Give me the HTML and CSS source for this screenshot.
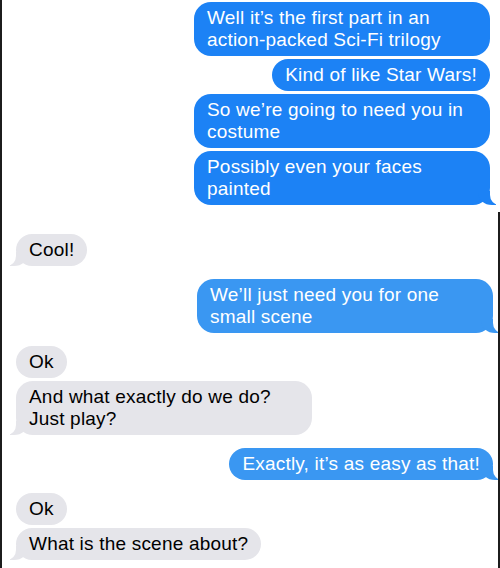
FILE: index.html
```html
<!DOCTYPE html>
<html>
<head>
<meta charset="utf-8">
<link rel="stylesheet" href="styles.css">
</head>
<body>
<div class="chat">
  <div class="group out">
    <div class="msg dark">Well it’s the first part in an action-packed Sci-Fi trilogy</div>
    <div class="msg dark">Kind of like Star Wars!</div>
    <div class="msg dark">So we’re going to need you in costume</div>
    <div class="msg dark tail">Possibly even your faces painted</div>
  </div>
  <div class="group in spaced">
    <div class="msg tail">Cool!</div>
  </div>
  <div class="group out shifted">
    <div class="msg tail">We’ll just need you for one small scene</div>
  </div>
  <div class="group in">
    <div class="msg">Ok</div>
    <div class="msg tail">And what exactly do we do? Just play?</div>
  </div>
  <div class="group out shifted">
    <div class="msg tail">Exactly, it’s as easy as that!</div>
  </div>
  <div class="group in">
    <div class="msg">Ok</div>
    <div class="msg tail">What is the scene about?</div>
  </div>
</div>
</body>
</html>
```

FILE: styles.css
```css
html, body {
  margin: 0;
  padding: 0;
  background: #fff;
}

body {
  font-family: "Liberation Sans", Arial, sans-serif;
  font-size: 19px;
  line-height: 22px;
  letter-spacing: 0.2px;
}

.chat {
  position: relative;
  box-sizing: border-box;
  width: 500px;
  height: 568px;
  overflow: hidden;
  padding-top: 2px;
  border-left: 2px solid #1c1c1c;
  display: flex;
  flex-direction: column;
  gap: 13px;
}

.chat::after {
  content: "";
  position: absolute;
  right: 0;
  top: 212px;
  bottom: 0;
  width: 2px;
  background: #1c1c1c;
  z-index: 2;
}

.group {
  display: flex;
  flex-direction: column;
  gap: 3px;
}

.group.spaced {
  margin-top: 16px;
}

.group.out {
  align-items: flex-end;
  padding-right: 10px;
}

.group.out.shifted {
  padding-right: 7px;
}

.group.in {
  align-items: flex-start;
  padding-left: 14px;
}

.msg {
  position: relative;
  box-sizing: border-box;
  max-width: 296px;
  padding: 5px 13px;
  border-radius: 17px;
}

.out .msg {
  background: #3a97f2;
  color: #fff;
}

.out .msg.dark {
  background: #1c82f5;
}

.in .msg {
  background: #e5e5ea;
  color: #000;
}

.out .msg.tail::before {
  content: "";
  position: absolute;
  right: -6px;
  bottom: 0;
  width: 18px;
  height: 14px;
  background: #3a97f2;
  border-bottom-left-radius: 14px 12px;
}

.out .msg.dark.tail::before {
  background: #1c82f5;
}

.out .msg.tail::after {
  content: "";
  position: absolute;
  right: -14px;
  bottom: 0;
  width: 14px;
  height: 14px;
  background: #fff;
  border-bottom-left-radius: 9px 10px;
}

.in .msg.tail::before {
  content: "";
  position: absolute;
  left: -6px;
  bottom: 0;
  width: 18px;
  height: 14px;
  background: #e5e5ea;
  border-bottom-right-radius: 14px 12px;
}

.in .msg.tail::after {
  content: "";
  position: absolute;
  left: -14px;
  bottom: 0;
  width: 14px;
  height: 14px;
  background: #fff;
  border-bottom-right-radius: 9px 10px;
}
```
